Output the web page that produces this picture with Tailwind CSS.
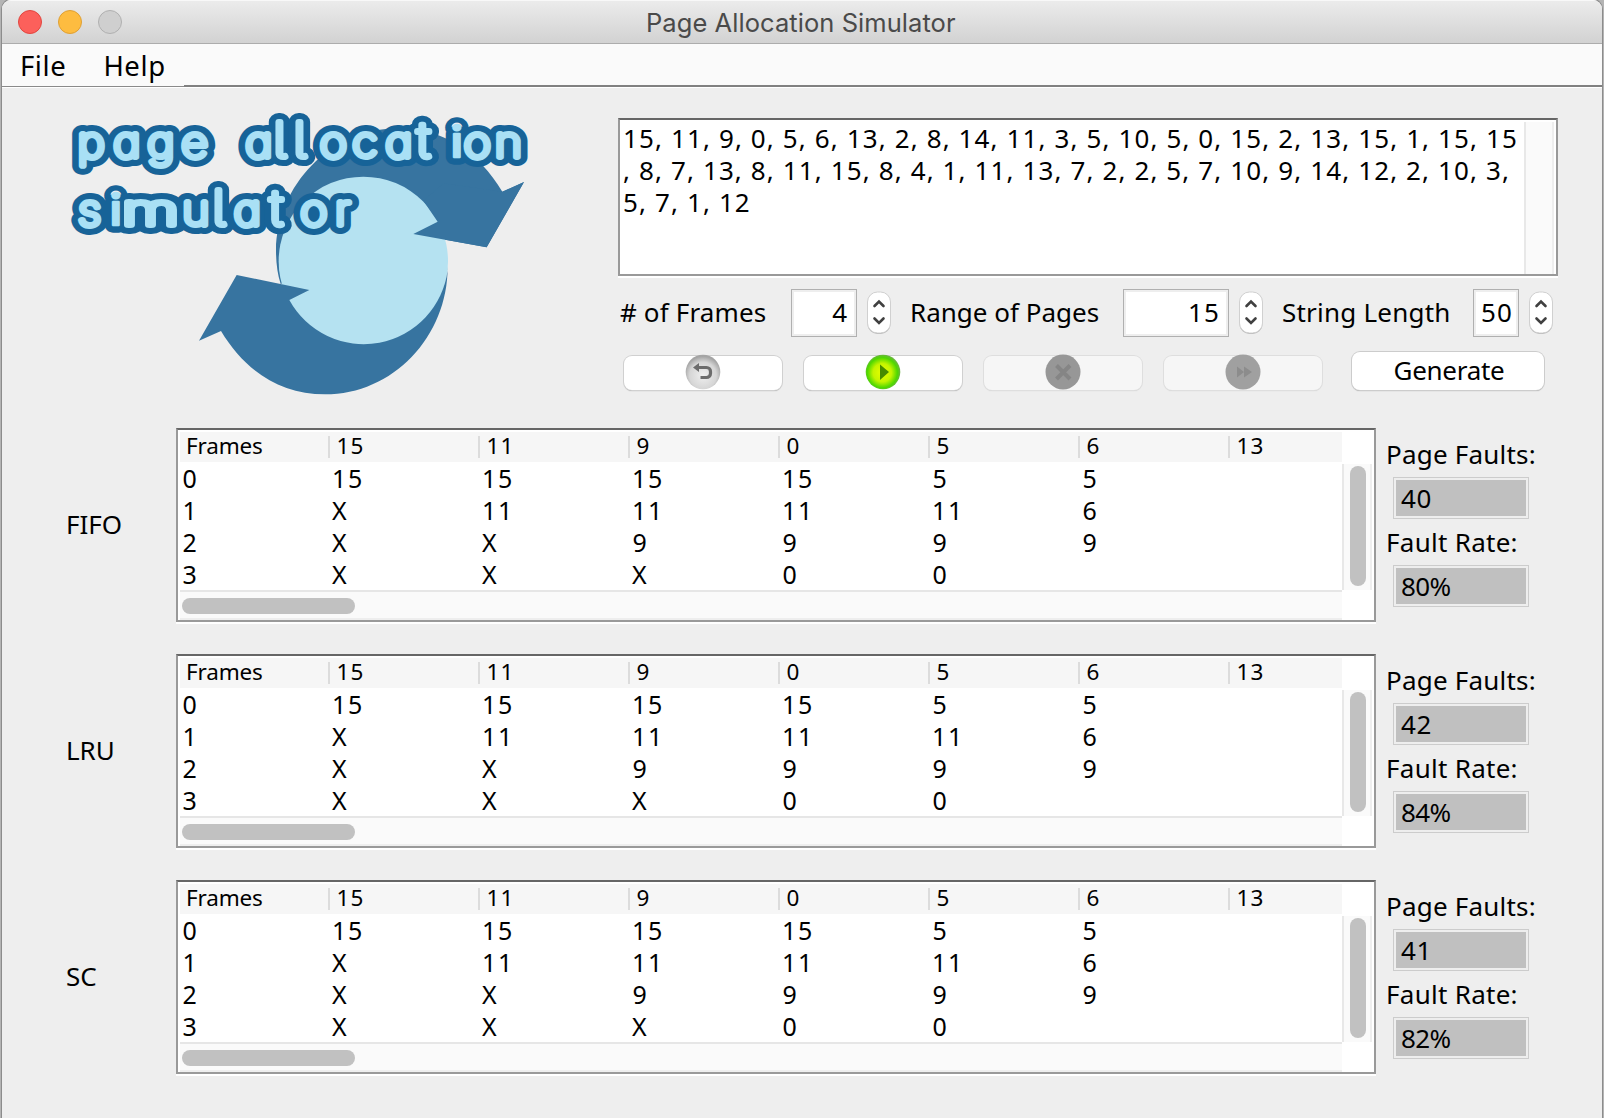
<!DOCTYPE html>
<html lang="en">
<head>
<meta charset="utf-8">
<title>Page Allocation Simulator</title>
<script src="https://cdn.jsdelivr.net/npm/@tailwindcss/browser@4"></script>
</head>
<body class="w-[1604px] h-[1118px] overflow-hidden bg-[#b4b4b4] px-[2px] font-['Noto_Sans',sans-serif] text-[26px] leading-[32px] text-black">
<div class="flex h-[1118px] w-[1600px] flex-col rounded-t-[9px] bg-[#eeeeee] overflow-hidden shadow-[0_0_0_1px_#8c8c8c]">
  <header class="relative flex h-[44px] shrink-0 items-center border-b border-[#acacac] bg-linear-to-b from-[#ececec] to-[#d2d2d2] pl-4 gap-4 shadow-[inset_0_1px_0_#f8f8f8]">
    <span class="size-6 rounded-full border border-[#e2463f] bg-[#fc605b]"></span>
    <span class="size-6 rounded-full border border-[#dfa034] bg-[#fdbc40]"></span>
    <span class="size-6 rounded-full border border-[#b0b0b0] bg-[#cfcfcf]"></span>
    <h1 class="ml-[508px] mt-[2px] whitespace-nowrap font-['Inter',sans-serif] text-[25.5px] tracking-[0.06px] text-[#4a4a4a]">Page Allocation Simulator</h1>
  </header>
  <nav class="flex h-[43px] shrink-0 bg-[#fafafa]">
    <div class="flex w-[182px] border-b border-[#8a8a8a] pl-[18px] pt-[6px] gap-[37px] text-[27.5px] tracking-[0.6px]"><span>File</span><span>Help</span></div>
    <div class="flex-1 border-b-2 border-[#808080]"></div>
  </nav>

  <section class="flex h-[341px] shrink-0 border-t border-white">
    <svg class="ml-[48px] mt-[12px] h-[310px] w-[500px] shrink-0" viewBox="0 0 1500 930">
      <path fill="#3774a0" d="M692 552 Q678 510 678 450 C681 257 842 85 1045 85 C1181 85 1287 158 1357 275 L1422 246 L1310 442 L1090 402 L940 484 Z"/>
      <circle cx="940" cy="484" r="254" fill="#b5e2f1"/>
      <path fill="#3774a0" d="M1193 500 C1193 711 1028 883 825 883 C689 883 583 810 513 693 L447 722 L560 525 L778 570 L718 600 A254 254 0 0 0 1193 510 Z"/>
      <path fill="#3774a0" d="M1163 365 L1090 402 L1310 442 L1422 246 L1357 275 L1180 250 L1120 302 Z"/>
      <g class="font-['Inter',sans-serif] [font-feature-settings:'cv11','cv05']" transform="scale(1.12 1)" font-size="123" font-weight="100" stroke-linejoin="round" stroke-linecap="round">
        <g fill="#176398" stroke="#176398" stroke-width="54">
          <text y="170" x="74 170 261 352 440 524">page a<tspan font-size="142" x="599 653">ll</tspan><tspan x="723 810 899">oca</tspan><tspan font-size="142" x="984">t</tspan><tspan x="1074" font-weight="500" stroke-width="46">i</tspan><tspan x="1109 1192">on</tspan></text>
          <text y="375" x="76">s<tspan x="161" font-weight="500" stroke-width="46">i</tspan><tspan x="194" textLength="150" lengthAdjust="spacingAndGlyphs">m</tspan><tspan x="355">u</tspan><tspan font-size="142" x="436">l</tspan><tspan x="493">a</tspan><tspan font-size="142" x="589">t</tspan><tspan x="671 764">or</tspan></text>
        </g>
        <g fill="#a9e0f5" stroke="#a9e0f5" stroke-width="18">
          <text y="170" x="74 170 261 352 440 524">page a<tspan font-size="142" x="599 653">ll</tspan><tspan x="723 810 899">oca</tspan><tspan font-size="142" x="984">t</tspan><tspan x="1074" font-weight="500" stroke-width="8">i</tspan><tspan x="1109 1192">on</tspan></text>
          <text y="375" x="76">s<tspan x="161" font-weight="500" stroke-width="8">i</tspan><tspan x="194" textLength="150" lengthAdjust="spacingAndGlyphs">m</tspan><tspan x="355">u</tspan><tspan font-size="142" x="436">l</tspan><tspan x="493">a</tspan><tspan font-size="142" x="589">t</tspan><tspan x="671 764">or</tspan></text>
        </g>
      </g>
    </svg>

    <div class="ml-[68px] mt-[30px] flex w-[940px] flex-col">
      <div class="flex h-[160px] w-[940px] justify-between border-b-2 border-white">
        <div class="flex h-[158px] w-[940px] justify-between border-2 border-[#999] border-t-[#666] bg-white pr-[2px]">
          <p class="pl-[3px] pt-[2px] whitespace-pre tracking-[1.12px]">15, 11, 9, 0, 5, 6, 13, 2, 8, 14, 11, 3, 5, 10, 5, 0, 15, 2, 13, 15, 1, 15, 15
, 8, 7, 13, 8, 11, 15, 8, 4, 1, 11, 13, 7, 2, 2, 5, 7, 10, 9, 14, 12, 2, 10, 3,
5, 7, 1, 12</p>
          <div class="mt-[2px] w-[30px] border-x-2 border-l-[#e8e8e8] border-r-[#eeeeee] bg-[#fafafa]"></div>
        </div>
      </div>

      <div class="mt-[11px] flex h-[48px] items-center">
        <label class="w-[173px] shrink-0 whitespace-nowrap pl-[2px] pb-[2px] tracking-[0.15px]">
          # of Frames</label>
        <div class="h-[48px] w-[66px] border border-[#b0b0b0] bg-white pr-[9px] pt-[6px] text-right shadow-[inset_0_0_0_2px_#eeeeee]">4</div>
        <div class="spin ml-[10px] flex"></div>
        <label class="w-[232px] shrink-0 whitespace-nowrap pl-[19px] pb-[2px] tracking-[0px]">Range of Pages</label>
        <div class="h-[48px] w-[106px] border border-[#b0b0b0] bg-white pr-[8px] pt-[6px] text-right tracking-[1.18px] shadow-[inset_0_0_0_2px_#eeeeee]">15</div>
        <div class="spin ml-[10px] flex"></div>
        <label class="w-[210px] shrink-0 whitespace-nowrap pl-[19px] pb-[2px] tracking-[0.22px]">String Length</label>
        <div class="h-[48px] w-[46px] border border-[#b0b0b0] bg-white pr-[5px] pt-[6px] text-right tracking-[1.18px] shadow-[inset_0_0_0_2px_#eeeeee]">50</div>
        <div class="spin ml-[10px] flex"></div>
      </div>

      <div class="mt-[14px] ml-[6px] flex h-[39px] items-end gap-[22px]">
        <button class="flex h-[34px] w-[158px] items-center justify-center rounded-[8px] bg-white shadow-[0_0_0_1px_#d0d0d0,0_1px_1px_#999]">
          <svg class="-mt-[2px] size-[36px] shrink-0" viewBox="0 0 36 36">
            <defs><radialGradient id="gs" cx=".5" cy=".6" r=".55"><stop offset="0" stop-color="#efefef"/><stop offset=".7" stop-color="#d6d6d6"/><stop offset="1" stop-color="#a4a4a4"/></radialGradient></defs>
            <circle cx="18" cy="18" r="17.3" fill="url(#gs)"/>
            <path d="M13 13.500H21.500a4 4 0 0 1 4 4V19.500a4 4 0 0 1-4 4H15.500" fill="none" stroke="#6c6c6c" stroke-width="3.200"/>
            <path d="M8 13.500L14 9V18Z" fill="#6c6c6c"/>
          </svg>
        </button>
        <button class="flex h-[34px] w-[158px] items-center justify-center rounded-[8px] bg-white shadow-[0_0_0_1px_#d0d0d0,0_1px_1px_#999]">
          <svg class="-mt-[2px] size-[36px] shrink-0" viewBox="0 0 36 36">
            <defs><radialGradient id="gg" cx=".48" cy=".52" r=".53"><stop offset="0" stop-color="#e8ff00"/><stop offset=".5" stop-color="#c4f400"/><stop offset=".82" stop-color="#4fd800"/><stop offset="1" stop-color="#6fb048"/></radialGradient></defs>
            <circle cx="18" cy="18" r="17.3" fill="url(#gg)"/>
            <path d="M15 10.500V26L24 18Z" fill="#468a00"/>
          </svg>
        </button>
        <button class="flex h-[34px] w-[158px] items-center justify-center rounded-[8px] bg-[#f6f6f6] shadow-[0_0_0_1px_#dedede,0_1px_1px_#ccc]">
          <svg class="-mt-[2px] size-[36px] shrink-0" viewBox="0 0 36 36">
            <circle cx="18" cy="18" r="17.500" fill="#979797"/>
            <path d="M11.500 11.500L25 25M25 11.500L11.500 25" stroke="#858585" stroke-width="4"/>
          </svg>
        </button>
        <button class="flex h-[34px] w-[158px] items-center justify-center rounded-[8px] bg-[#f6f6f6] shadow-[0_0_0_1px_#dedede,0_1px_1px_#ccc]">
          <svg class="-mt-[2px] size-[36px] shrink-0" viewBox="0 0 36 36">
            <circle cx="18" cy="18" r="17.500" fill="#a0a0a0"/>
            <path d="M12 12.500V23.500L19 18ZM19 12.500V23.500L27 18Z" fill="#8c8c8c"/>
          </svg>
        </button>
        <button class="ml-[8px] h-[38px] w-[192px] rounded-[8px] bg-white pb-[3px] pl-[2px] tracking-[-0.3px] shadow-[0_0_0_1px_#cccccc,0_1px_1px_#999]">Generate</button>
      </div>
    </div>
  </section>

  <main id="panels" class="flex flex-col"></main>
</div>

<script>
const spinner = `<svg class="h-[44px] w-[24px]" viewBox="0 0 24 44">
  <rect x=".5" y="2" width="23" height="41" rx="10" fill="#b4b4b4"/>
  <rect x=".5" y="1" width="23" height="41" rx="10" fill="#fff" stroke="#d0d0d0"/>
  <path d="M7.500 15L12 10.500L16.500 15M7.500 27.500L12 32L16.500 27.500" fill="none" stroke="#404040" stroke-width="2.600" stroke-linecap="round"/></svg>`;
document.querySelectorAll('.spin').forEach(e => e.innerHTML = spinner);

const head = ['15', '11', '9', '0', '5', '6', '13'];
const rows = [
  ['0', '15', '15', '15', '15', '5', '5'],
  ['1', 'X', '11', '11', '11', '11', '6'],
  ['2', 'X', 'X', '9', '9', '9', '9'],
  ['3', 'X', 'X', 'X', '0', '0', '']
];
const results = [['FIFO', '40', '80%'], ['LRU', '42', '84%'], ['SC', '41', '82%']];
const cell = c => `<div class="w-[150px] shrink-0 ${c.length === 1 && c !== 'X' ? 'pl-[2.5px]' : 'pl-[2px]'}">${c}</div>`;

document.getElementById('panels').innerHTML = results.map(([name, faults, rate]) => `
<section class="flex h-[226px]">
  <div class="w-[174px] shrink-0 pl-[64px] pt-[80px]">${name}</div>
  <div class="flex h-[196px] w-[1200px] shrink-0 flex-col border-b-2 border-white">
    <div class="flex h-[194px] border-2 border-[#999] border-t-[#666] bg-white pl-[2px] pt-[2px] pr-[2px]">
      <div class="flex w-[1162px] shrink-0 flex-col">
        <div class="flex h-[30px] shrink-0 items-center bg-[#f6f6f6] text-[22.5px] leading-[26px]">
          <div class="w-[148px] shrink-0 pl-[6px] pb-[2px] tracking-[-0.15px]">Frames</div>
          ${head.map((h, i) => `<div class="flex ${i < 6 ? 'w-[150px]' : 'w-[114px]'} shrink-0 items-center"><i class="h-[22px] w-[2px] bg-[#dcdcdc]"></i><span class="pl-[6.5px] pb-[2px] tracking-[1.2px]">${h}</span></div>`).join('')}
        </div>
        <div class="h-[128px] text-[25px] tracking-[1.8px]">
          ${rows.map(r => `<div class="flex h-[32px]">${r.map(cell).join('')}</div>`).join('')}
        </div>
        <div class="h-[30px] border-y-2 border-t-[#e6e6e6] border-b-[#eeeeee] bg-[#fafafa] pl-[2px] pt-[6px]"><div class="h-[16px] w-[173px] rounded-full bg-[#c1c1c1]"></div></div>
      </div>
      <div class="mt-[32px] h-[126px] w-[30px] border-x-2 border-l-[#e8e8e8] border-r-[#eeeeee] bg-[#fafafa] pl-[6px] pt-[2px]"><div class="h-[120px] w-[16px] rounded-full bg-[#c1c1c1]"></div></div>
    </div>
  </div>
  <div class="flex flex-col pl-[10px] pt-[10px]">
    <div class="whitespace-nowrap tracking-[0.2px]">Page Faults:</div>
    <div class="ml-[7px] mt-[7px] h-[42px] w-[136px] border border-[#cccccc] bg-[#c0c0c0] pl-[7px] pt-[4px] tracking-[0.6px] shadow-[inset_0_0_0_2px_#eeeeee]">${faults}</div>
    <div class="mt-[7px] whitespace-nowrap tracking-[0.28px]">Fault Rate:</div>
    <div class="ml-[7px] mt-[7px] h-[42px] w-[136px] border border-[#cccccc] bg-[#c0c0c0] pl-[7px] pt-[4px] tracking-[-0.6px] shadow-[inset_0_0_0_2px_#eeeeee]">${rate}</div>
  </div>
</section>`).join('');
</script>
</body>
</html>
